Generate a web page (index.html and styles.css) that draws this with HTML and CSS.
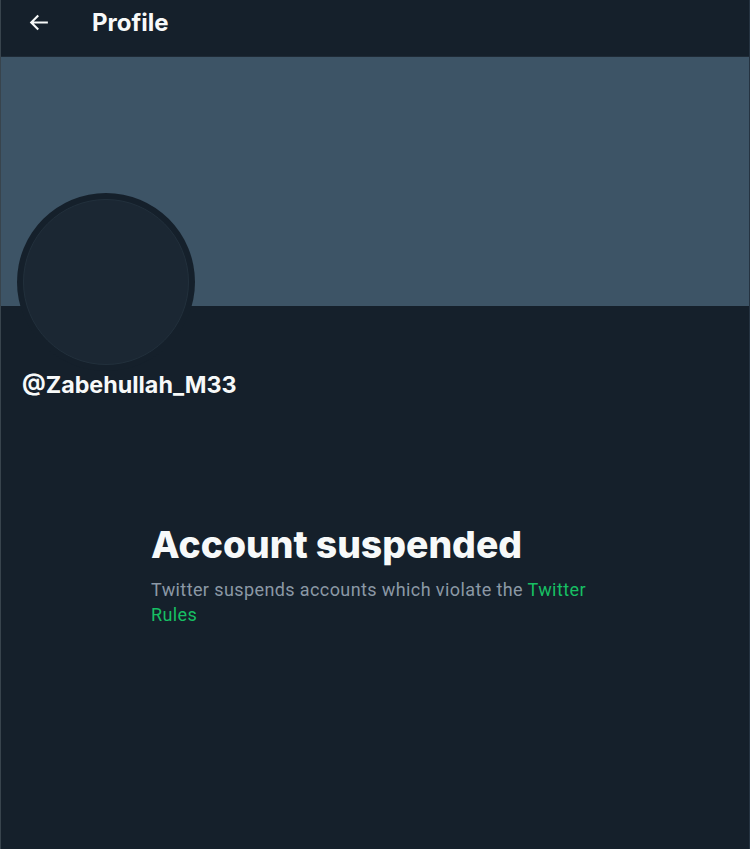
FILE: index.html
```html
<!DOCTYPE html>
<html>
<head>
<meta charset="utf-8">
<link rel="stylesheet" href="styles.css">
</head>
<body>
<div class="page">
  <header class="topbar">
    <div class="back">
      <svg viewBox="0 0 24 24" width="25" height="25"><path fill="#f7f9f9" d="M7.414 13l5.043 5.04-1.414 1.42L3.586 12l7.457-7.46 1.414 1.42L7.414 11H21v2H7.414z"/></svg>
    </div>
    <h1 class="title">Profile</h1>
  </header>
  <div class="banner"></div>
  <div class="profile">
    <div class="avatar"><div class="avatar-inner"></div></div>
    <div class="handle">@Zabehullah_M33</div>
  </div>
  <section class="suspended">
    <h2 class="s-title">Account suspended</h2>
    <p class="s-text">Twitter suspends accounts which violate the <a class="s-link">Twitter</a> <a class="s-link">Rules</a></p>
  </section>
</div>
</body>
</html>
```
FILE: styles.css
```css
html, body {
  margin: 0;
  padding: 0;
  background: #15202b;
}
body {
  font-family: "Inter", "Roboto", sans-serif;
  color: #f7f9f9;
}
.page {
  width: 748px;
  height: 849px;
  border-left: 1px solid #38444d;
  border-right: 1px solid #253341;
  background: #15202b;
  overflow: hidden;
}
.topbar {
  height: 57px;
  display: flex;
  align-items: center;
  padding-left: 25px;
  padding-bottom: 11px;
  box-sizing: border-box;
  border-bottom: 1px solid #1e2a36;
}
.back {
  width: 25px;
  height: 25px;
  display: flex;
  margin-right: 41px;
}
.title {
  margin: 0;
  font-size: 24px;
  font-weight: 700;
  line-height: 28px;
}
.banner {
  height: 249px;
  background: #3d5466;
}
.profile {
  padding-left: 16px;
}
.avatar {
  width: 178px;
  height: 178px;
  border-radius: 50%;
  background: #15202b;
  margin-top: -113px;
  display: flex;
  align-items: center;
  justify-content: center;
}
.avatar-inner {
  width: 166px;
  height: 166px;
  border-radius: 50%;
  background: #1b2733;
  border: 1px solid #22303c;
  box-sizing: border-box;
}
.handle {
  margin-top: -1px;
  padding-left: 5px;
  font-size: 23.3px;
  font-weight: 700;
  line-height: 30px;
}
.suspended {
  width: 448px;
  margin: 124px auto 0;
}
.s-title {
  margin: 0;
  font-size: 37.3px;
  font-weight: 800;
  line-height: 42px;
}
.s-text {
  margin: 11px 0 0;
  font-family: "Roboto", sans-serif;
  font-size: 18px;
  letter-spacing: 0.4px;
  line-height: 25px;
  color: #8b98a5;
}
.s-link {
  color: #17bf63;
  text-decoration: none;
}
```
